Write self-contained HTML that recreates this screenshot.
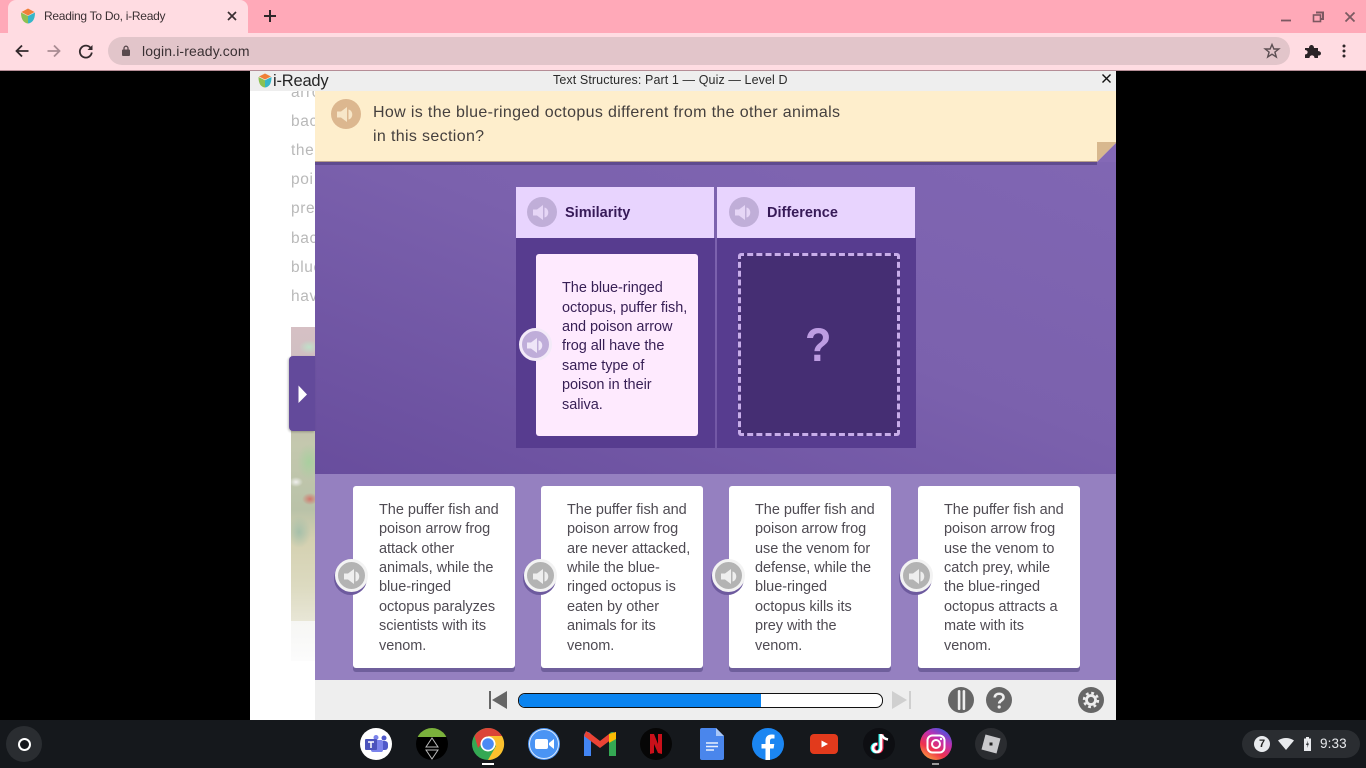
<!DOCTYPE html>
<html>
<head>
<meta charset="utf-8">
<style>
html,body{margin:0;padding:0;width:1366px;height:768px;overflow:hidden;background:#000;font-family:"Liberation Sans",sans-serif}
.a{position:absolute}
.t{position:absolute;white-space:nowrap}
svg{position:absolute;overflow:visible}
.ln{position:absolute;white-space:nowrap;font-size:14.5px;line-height:19.5px;color:#4f4b53;letter-spacing:-.05px}
.card{position:absolute;top:486px;width:162px;height:182px;background:#fff;border-radius:3px;box-shadow:0 4px 0 #6f5f9c}
.sp{position:absolute;top:559px;width:27px;height:27px;border-radius:50%;background:#b3b3b3;border:3px solid #f3f3f3;box-shadow:-1px 3px 0 #6d5a9e}
.hd{position:absolute;top:187px;width:198px;height:51px;background:#e8d4fe}
.hd b{position:absolute;left:49px;top:17px;font-size:14.5px;line-height:18px;color:#371a58}
.ic{position:absolute;width:30px;height:30px;border-radius:50%;background:#c0aed8}
.dock{position:absolute;top:728px;width:32px;height:32px;border-radius:50%}
.p{position:absolute;left:41px;white-space:nowrap;font-size:15.5px;line-height:18px;color:#b9b9b9;letter-spacing:.6px}
</style>
</head>
<body>
<!-- browser chrome -->
<div class="a" style="left:0;top:0;width:1366px;height:33px;background:#ffa9b8"></div>
<div class="a" style="left:0;top:33px;width:1366px;height:37px;background:#ffdce2"></div>
<div class="a" style="left:0;top:70px;width:1366px;height:1px;background:#b58d96"></div>
<div class="a" style="left:8px;top:0;width:240px;height:33px;background:#ffdce2;border-radius:8px 8px 0 0"></div>
<svg style="left:20px;top:8px" width="16" height="16" viewBox="0 0 16 16"><path d="M8 .5 14.5 4 8 7.500 1.500 4Z" fill="#f08038"/><path d="M1 4.500 8 8V15.500C4 15 1 12 1 4.500Z" fill="#8cc152"/><path d="M15 4.500 8 8V15.500C12 15 15 12 15 4.500Z" fill="#35b6c8"/></svg>
<div class="t" style="left:44px;top:8px;font-size:12px;line-height:16px;color:#3b3033;letter-spacing:-.27px">Reading To Do, i-Ready</div>
<svg style="left:226px;top:10px" width="12" height="12" viewBox="0 0 12 12"><path d="M2 2 10 10M10 2 2 10" stroke="#3a2f32" stroke-width="1.700"/></svg>
<svg style="left:263px;top:9px" width="14" height="14" viewBox="0 0 14 14"><path d="M7 1V13M1 7H13" stroke="#2e2629" stroke-width="2"/></svg>
<svg style="left:1279px;top:10px" width="14" height="14" viewBox="0 0 14 14"><path d="M2 10.500H12" stroke="#7c5861" stroke-width="1.800"/></svg>
<svg style="left:1312px;top:11px" width="13" height="12" viewBox="0 0 13 12"><path d="M4 1.500H11V8H8" fill="none" stroke="#7c5861" stroke-width="2"/><rect x="1.500" y="4" width="7" height="6.500" fill="none" stroke="#7c5861" stroke-width="1.600"/></svg>
<svg style="left:1344px;top:11px" width="12" height="12" viewBox="0 0 12 12"><path d="M1.500 1.500 10.500 10.500M10.500 1.500 1.500 10.500" stroke="#7b5a62" stroke-width="1.800"/></svg>
<svg style="left:14px;top:43px" width="16" height="16" viewBox="0 0 16 16"><path d="M14.500 8H2.500M8 2.500 2.500 8 8 13.500" fill="none" stroke="#33292c" stroke-width="1.800"/></svg>
<svg style="left:46px;top:43px" width="16" height="16" viewBox="0 0 16 16"><path d="M1.500 8H13.500M8 2.500 13.500 8 8 13.500" fill="none" stroke="#a98c93" stroke-width="1.800"/></svg>
<svg style="left:78px;top:43px" width="16" height="16" viewBox="0 0 16 16"><path d="M13 5.500A6 6 0 1 0 13.800 9.500" fill="none" stroke="#33292c" stroke-width="1.800"/><path d="M14.500 2V7H9.500Z" fill="#33292c"/></svg>
<div class="a" style="left:108px;top:37px;width:1182px;height:28px;border-radius:14px;background:#e2c5ca"></div>
<svg style="left:121px;top:45px" width="10" height="12" viewBox="0 0 10 12"><rect x="1" y="4.500" width="8" height="6.500" rx="1" fill="#5a4a4e"/><path d="M3 5V3.200A2 2 0 0 1 7 3.200V5" fill="none" stroke="#5a4a4e" stroke-width="1.300"/></svg>
<div class="t" style="left:142px;top:43px;font-size:14px;line-height:16px;color:#3a3033;letter-spacing:.12px">login.i-ready.com</div>
<svg style="left:1264px;top:43px" width="16" height="16" viewBox="0 0 16 16"><path d="M8 1.500 9.900 6H14.800L10.900 9.100 12.300 14 8 11.200 3.700 14 5.100 9.100 1.200 6H6.100Z" fill="none" stroke="#5c4f53" stroke-width="1.400"/></svg>
<svg style="left:1304px;top:43px" width="16" height="16" viewBox="0 0 16 16"><path d="M1 5H5C5 1 10 1 10 5H14V8C18 8 18 13 14 12.500V15H10.500C10.500 11.500 5.500 11.500 5.500 15H1V11.500C4.500 11.500 4.500 7 1 7Z" fill="#2a2326"/></svg>
<svg style="left:1342px;top:44px" width="4" height="14" viewBox="0 0 4 14"><circle cx="2" cy="2" r="1.500" fill="#2e2629"/><circle cx="2" cy="7" r="1.500" fill="#2e2629"/><circle cx="2" cy="12" r="1.500" fill="#2e2629"/></svg>

<!-- app frame -->
<div class="a" style="left:250px;top:71px;width:866px;height:649px;background:#fff;overflow:hidden">
  <div class="p" style="top:13px">arrow</div>
  <div class="p" style="top:42px">back</div>
  <div class="p" style="top:71px">the</div>
  <div class="p" style="top:100px">poi</div>
  <div class="p" style="top:129px">pre</div>
  <div class="p" style="top:159px">back</div>
  <div class="p" style="top:188px">blue</div>
  <div class="p" style="top:217px">have</div>
  <div class="a" style="left:41px;top:256px;width:24px;height:294px;background:radial-gradient(ellipse 10px 7px at 18px 20px,#bfe0c8 0,rgba(191,224,200,0) 100%),radial-gradient(ellipse 12px 18px at 18px 135px,#a9cf9f 0,rgba(169,207,159,0) 100%),radial-gradient(ellipse 8px 6px at 19px 172px,#d2776c 0,rgba(210,119,108,0) 100%),radial-gradient(ellipse 7px 5px at 5px 155px,#f0f0ee 0,rgba(240,240,238,0) 100%),radial-gradient(ellipse 12px 16px at 8px 205px,#a6c0aa 0,rgba(166,192,170,0) 100%),linear-gradient(180deg,#d6c0c4 0,#cfbfc2 12%,#c4bcae 22%,#c4c8ae 40%,#b9c2a8 62%,#d4d0b0 72%,#dcdac0 88%,#e8e6d6 100%)"></div>
  <div class="a" style="left:41px;top:550px;width:24px;height:40px;background:linear-gradient(180deg,#f6f6f4,#fcfcfc)"></div>
</div>
<!-- i-Ready title bar -->
<div class="a" style="left:250px;top:71px;width:866px;height:20px;background:#eeeeee"></div>
<svg style="left:258px;top:73px" width="14" height="15" viewBox="0 0 14 15"><path d="M7 .5 13 3.500 7 6.500 1 3.500Z" fill="#f08038"/><path d="M.5 4 7 7.200V14.500C3 14 .5 11 .5 4Z" fill="#8cc152"/><path d="M13.500 4 7 7.200V14.500C11 14 13.500 11 13.500 4Z" fill="#35b6c8"/></svg>
<div class="t" style="left:273px;top:71px;font-size:16.500px;line-height:20px;color:#252525;letter-spacing:-.2px">i-Ready</div>
<div class="t" style="left:553px;top:72px;font-size:12.500px;line-height:16px;color:#2b2b2b;letter-spacing:.1px">Text Structures: Part 1 — Quiz — Level D</div>
<svg style="left:1102px;top:74px" width="9" height="9" viewBox="0 0 9 9"><path d="M.5 .5 8.500 8.500M8.500 .5 .5 8.500" stroke="#111" stroke-width="1.400"/></svg>

<!-- activity -->
<div class="a" style="left:315px;top:162px;width:801px;height:312px;background:linear-gradient(to bottom left,#8066b3 0,#7b61ad 45%,#684d9d 100%)"></div>
<div class="a" style="left:315px;top:474px;width:801px;height:206px;background:#9580c0"></div>
<div class="a" style="left:315px;top:680px;width:801px;height:40px;background:#eeeeee"></div>
<div class="a" style="left:289px;top:356px;width:26px;height:75px;background:#634a9b;border-radius:4px 0 0 4px;box-shadow:-1px 1px 2px rgba(0,0,0,.25)"></div>
<svg style="left:298px;top:385px" width="10" height="19" viewBox="0 0 10 19"><path d="M.5 .5 9 9.500 .5 18Z" fill="#fff"/></svg>

<!-- question banner -->
<div class="a" style="left:315px;top:91px;width:801px;height:70px;background:#feeecc"></div>
<div class="a" style="left:315px;top:161px;width:782px;height:1px;background:#b9a08a"></div>
<div class="a" style="left:315px;top:162px;width:782px;height:3px;background:#5f4a8e"></div>
<svg style="left:1097px;top:142px" width="19" height="20" viewBox="0 0 19 20"><path d="M0 20V0H19V1L0 20Z" fill="#d8b88e"/><path d="M0 20 19 1V20Z" fill="#8469b6"/></svg>
<div class="a" style="left:331px;top:99px;width:30px;height:30px;border-radius:50%;background:#dcb78f"></div>
<svg style="left:336px;top:105px" width="20" height="18" viewBox="0 0 20 18"><path d="M1 6.500H5L11 2V17L5 12.500H1Z" fill="#f7e6c8"/><path d="M12.500 4.500C17.500 5.500 17.500 13.500 12.500 14.500Z" fill="#f7e6c8"/></svg>
<div class="t" style="left:373px;top:103px;font-size:16px;line-height:19px;color:#45403e;letter-spacing:.35px">How is the blue-ringed octopus different from the other animals</div>
<div class="t" style="left:373px;top:127px;font-size:16px;line-height:19px;color:#45403e;letter-spacing:.35px">in this section?</div>

<!-- columns -->
<div class="a" style="left:516px;top:238px;width:199px;height:210px;background:#573c8f"></div>
<div class="a" style="left:717px;top:238px;width:199px;height:210px;background:#573c8f"></div>
<div class="hd" style="left:516px"><b>Similarity</b></div>
<div class="hd" style="left:717px"><b style="left:50px">Difference</b></div>
<div class="ic" style="left:527px;top:197px"></div>
<div class="ic" style="left:729px;top:197px"></div>
<svg style="left:532px;top:203px" width="20" height="18" viewBox="0 0 20 18"><path d="M1 6.500H5L11 2V17L5 12.500H1Z" fill="#e6d6f6"/><path d="M12.500 4.500C17.500 5.500 17.500 13.500 12.500 14.500Z" fill="#e6d6f6"/></svg>
<svg style="left:734px;top:203px" width="20" height="18" viewBox="0 0 20 18"><path d="M1 6.500H5L11 2V17L5 12.500H1Z" fill="#e6d6f6"/><path d="M12.500 4.500C17.500 5.500 17.500 13.500 12.500 14.500Z" fill="#e6d6f6"/></svg>

<div class="a" style="left:536px;top:254px;width:162px;height:182px;background:#feeafe;border-radius:3px"></div>
<div class="ln" style="left:562px;top:279px;color:#371f55">The blue-ringed</div>
<div class="ln" style="left:562px;top:299px;color:#371f55">octopus, puffer fish,</div>
<div class="ln" style="left:562px;top:318px;color:#371f55">and poison arrow</div>
<div class="ln" style="left:562px;top:337px;color:#371f55">frog all have the</div>
<div class="ln" style="left:562px;top:357px;color:#371f55">same type of</div>
<div class="ln" style="left:562px;top:376px;color:#371f55">poison in their</div>
<div class="ln" style="left:562px;top:396px;color:#371f55">saliva.</div>
<div class="a" style="left:519px;top:328px;width:27px;height:27px;border-radius:50%;background:#bfadd9;border:3px solid #f3eaf8"></div>
<svg style="left:526px;top:336px" width="20" height="18" viewBox="0 0 20 18"><path d="M1 6.500H5L11 2V17L5 12.500H1Z" fill="#efe6f8"/><path d="M12.500 4.500C17.500 5.500 17.500 13.500 12.500 14.500Z" fill="#efe6f8"/></svg>

<div class="a" style="left:738px;top:253px;width:156px;height:177px;background:#452e73;border:3px dashed #c8aeea;border-radius:3px"></div>
<div class="t" style="left:805px;top:318px;font-size:47px;line-height:54px;font-weight:bold;color:#bd9de2;transform:scaleX(.92);transform-origin:0 0">?</div>

<!-- answer cards -->
<div class="card" style="left:353px"></div>
<div class="card" style="left:541px"></div>
<div class="card" style="left:729px"></div>
<div class="card" style="left:918px"></div>

<div class="ln" style="left:379px;top:501px">The puffer fish and</div>
<div class="ln" style="left:379px;top:520px">poison arrow frog</div>
<div class="ln" style="left:379px;top:540px">attack other</div>
<div class="ln" style="left:379px;top:559px">animals, while the</div>
<div class="ln" style="left:379px;top:578px">blue-ringed</div>
<div class="ln" style="left:379px;top:598px">octopus paralyzes</div>
<div class="ln" style="left:379px;top:617px">scientists with its</div>
<div class="ln" style="left:379px;top:637px">venom.</div>

<div class="ln" style="left:567px;top:501px">The puffer fish and</div>
<div class="ln" style="left:567px;top:520px">poison arrow frog</div>
<div class="ln" style="left:567px;top:540px">are never attacked,</div>
<div class="ln" style="left:567px;top:559px">while the blue-</div>
<div class="ln" style="left:567px;top:578px">ringed octopus is</div>
<div class="ln" style="left:567px;top:598px">eaten by other</div>
<div class="ln" style="left:567px;top:617px">animals for its</div>
<div class="ln" style="left:567px;top:637px">venom.</div>

<div class="ln" style="left:755px;top:501px">The puffer fish and</div>
<div class="ln" style="left:755px;top:520px">poison arrow frog</div>
<div class="ln" style="left:755px;top:540px">use the venom for</div>
<div class="ln" style="left:755px;top:559px">defense, while the</div>
<div class="ln" style="left:755px;top:578px">blue-ringed</div>
<div class="ln" style="left:755px;top:598px">octopus kills its</div>
<div class="ln" style="left:755px;top:617px">prey with the</div>
<div class="ln" style="left:755px;top:637px">venom.</div>

<div class="ln" style="left:944px;top:501px">The puffer fish and</div>
<div class="ln" style="left:944px;top:520px">poison arrow frog</div>
<div class="ln" style="left:944px;top:540px">use the venom to</div>
<div class="ln" style="left:944px;top:559px">catch prey, while</div>
<div class="ln" style="left:944px;top:578px">the blue-ringed</div>
<div class="ln" style="left:944px;top:598px">octopus attracts a</div>
<div class="ln" style="left:944px;top:617px">mate with its</div>
<div class="ln" style="left:944px;top:637px">venom.</div>

<div class="sp" style="left:335px"></div>
<div class="sp" style="left:524px"></div>
<div class="sp" style="left:712px"></div>
<div class="sp" style="left:900px"></div>
<svg style="left:343px;top:567px" width="20" height="18" viewBox="0 0 20 18"><path d="M1 6.500H5L11 2V17L5 12.500H1Z" fill="#eee"/><path d="M12.500 4.500C17.500 5.500 17.500 13.500 12.500 14.500Z" fill="#eee"/></svg>
<svg style="left:532px;top:567px" width="20" height="18" viewBox="0 0 20 18"><path d="M1 6.500H5L11 2V17L5 12.500H1Z" fill="#eee"/><path d="M12.500 4.500C17.500 5.500 17.500 13.500 12.500 14.500Z" fill="#eee"/></svg>
<svg style="left:720px;top:567px" width="20" height="18" viewBox="0 0 20 18"><path d="M1 6.500H5L11 2V17L5 12.500H1Z" fill="#eee"/><path d="M12.500 4.500C17.500 5.500 17.500 13.500 12.500 14.500Z" fill="#eee"/></svg>
<svg style="left:908px;top:567px" width="20" height="18" viewBox="0 0 20 18"><path d="M1 6.500H5L11 2V17L5 12.500H1Z" fill="#eee"/><path d="M12.500 4.500C17.500 5.500 17.500 13.500 12.500 14.500Z" fill="#eee"/></svg>

<!-- player bar -->
<svg style="left:489px;top:690px" width="19" height="20" viewBox="0 0 19 20"><rect x="0" y="1" width="2" height="18" fill="#666"/><path d="M18 1V19L3 10Z" fill="#666"/></svg>
<div class="a" style="left:518px;top:693px;width:363px;height:13px;background:#fff;border:1px solid #111;border-radius:7px;overflow:hidden"><div style="width:242px;height:13px;background:#0a84f0"></div></div>
<svg style="left:892px;top:690px" width="19" height="20" viewBox="0 0 19 20"><path d="M0 1V19L15 10Z" fill="#cfcfcf"/><rect x="17" y="1" width="2" height="18" fill="#cfcfcf"/></svg>
<svg style="left:948px;top:687px" width="26" height="26" viewBox="0 0 26 26"><circle cx="13" cy="13" r="13" fill="#666"/><rect x="9.800" y="3" width="2.600" height="20" rx="1.300" fill="#eee"/><rect x="14.600" y="3" width="2.600" height="20" rx="1.300" fill="#eee"/></svg>
<svg style="left:986px;top:687px" width="26" height="26" viewBox="0 0 26 26"><circle cx="13" cy="13" r="13" fill="#666"/><path d="M8.800 10.500C8.800 5.500 17.500 5.500 17.500 10.500C17.500 13.500 13.200 13.500 13.200 16.500" fill="none" stroke="#eee" stroke-width="2.600"/><circle cx="13.200" cy="20" r="1.600" fill="#eee"/></svg>
<svg style="left:1078px;top:687px" width="26" height="26" viewBox="0 0 26 26"><circle cx="13" cy="13" r="13" fill="#666"/><circle cx="13" cy="13" r="4.500" fill="none" stroke="#eee" stroke-width="2.800"/><circle cx="13" cy="13" r="7" fill="none" stroke="#eee" stroke-width="2.400" stroke-dasharray="2.800 2.700"/></svg>

<!-- shelf -->
<div class="a" style="left:0;top:720px;width:1366px;height:48px;background:#15181c"></div>
<div class="a" style="left:6px;top:726px;width:36px;height:36px;border-radius:50%;background:#2a2d31"></div>
<div class="a" style="left:18px;top:738px;width:9px;height:9px;border-radius:50%;border:2px solid #fff;background:#15181c"></div>

<div class="dock" style="left:360px;background:#fff"></div>
<svg style="left:365px;top:735px" width="24" height="18" viewBox="0 0 24 18"><circle cx="19" cy="3" r="2.500" fill="#5059c9"/><rect x="13" y="6" width="10" height="9" rx="3" fill="#5059c9"/><circle cx="11" cy="2.500" r="2.500" fill="#7b83eb"/><rect x="6" y="5" width="12" height="12" rx="2" fill="#7b83eb"/><rect x="0" y="4" width="12" height="11" rx="1" fill="#4b53bc"/><path d="M3 7H9M6 7V13" stroke="#fff" stroke-width="1.500"/></svg>

<div class="dock" style="left:416px;background:#000;overflow:hidden"><div style="width:32px;height:9px;background:#7bb13c"></div></div>
<svg style="left:425px;top:737px" width="14" height="24" viewBox="0 0 14 24"><path d="M7 1 13 10H1ZM7 22 13 13H1Z" fill="none" stroke="#bbb" stroke-width="1"/></svg>

<svg style="left:472px;top:728px" width="32" height="32" viewBox="0 0 32 32"><circle cx="16" cy="16" r="16" fill="#34a853"/><path d="M16 0A16 16 0 0 1 30 8L16 8 6 20 2.500 8A16 16 0 0 1 16 0Z" fill="#db4437"/><path d="M30 8A16 16 0 0 1 16 32L24 18 16 8Z" fill="#fbc02d"/><circle cx="16" cy="16" r="7.500" fill="#fff"/><circle cx="16" cy="16" r="5.800" fill="#4a8af4"/></svg>
<div class="a" style="left:482px;top:763px;width:12px;height:2px;background:#fff"></div>

<svg style="left:528px;top:728px" width="32" height="32" viewBox="0 0 32 32"><circle cx="16" cy="16" r="16" fill="#4a94f4"/><circle cx="16" cy="16" r="14.500" fill="none" stroke="#dbe9fc" stroke-width="1"/><rect x="7" y="11" width="13" height="10" rx="2" fill="#fff"/><path d="M21 15 26 11V21L21 17Z" fill="#fff"/></svg>

<svg style="left:583px;top:731px" width="34" height="26" viewBox="0 0 34 26"><path d="M1 25V5C1 1 5 0 7 2L8 3V25Z" fill="#4285f4"/><path d="M26 25V3L27 2C29 0 33 1 33 5V25Z" fill="#34a853"/><path d="M1 5 17 17 33 5 33 1 26 3 17 10 8 3 3 0Z" fill="#ea4335"/><path d="M26 3 33 1V8L26 12Z" fill="#fbbc04"/></svg>

<div class="dock" style="left:640px;background:#060606"></div>
<svg style="left:650px;top:734px" width="12" height="20" viewBox="0 0 12 20"><path d="M0 0H4L8 10V0H12V20L8 19 4 10V19L0 20Z" fill="#c9101a"/></svg>

<svg style="left:700px;top:728px" width="24" height="32" viewBox="0 0 24 32"><path d="M2 0H16L24 8V30A2 2 0 0 1 22 32H2A2 2 0 0 1 0 30V2A2 2 0 0 1 2 0Z" fill="#4a86ec"/><path d="M16 0 24 8H16Z" fill="#a9c7f7"/><path d="M6 15H18M6 18.500H18M6 22H14" stroke="#e8f0fe" stroke-width="1.400"/></svg>

<svg style="left:752px;top:728px" width="32" height="32" viewBox="0 0 32 32"><circle cx="16" cy="16" r="16" fill="#1b86f2"/><path d="M13.500 32V20.500H9.500V16H13.500V12.500C13.500 8.500 16 6.500 19.500 6.500C21 6.500 22.500 6.700 22.500 6.700V10.500H20.500C18.700 10.500 18 11.500 18 13V16H22.300L21.600 20.500H18V32Z" fill="#fff"/></svg>

<svg style="left:810px;top:734px" width="28" height="20" viewBox="0 0 28 20"><rect width="28" height="20" rx="4" fill="#e23a1c"/><path d="M11.500 6.500 18 10 11.500 13.500Z" fill="#fff"/></svg>

<div class="dock" style="left:863px;background:#0d0e12"></div>
<svg style="left:870px;top:733px" width="19" height="22" viewBox="0 0 19 22"><path d="M10 1V15A4 4 0 1 1 6 11" fill="none" stroke="#25f4ee" stroke-width="3"/><path d="M12 1V15A4 4 0 1 1 8 11" fill="none" stroke="#fe2c55" stroke-width="3"/><path d="M11 1V15A4 4 0 1 1 7 11" fill="none" stroke="#fff" stroke-width="2.600"/><path d="M12 2C13 5 15 6 18 6.500" fill="none" stroke="#fff" stroke-width="2.600"/></svg>

<svg style="left:920px;top:728px" width="32" height="32" viewBox="0 0 32 32"><defs><linearGradient id="ig" x1="0" y1="1" x2=".6" y2="0"><stop offset="0" stop-color="#fdc83c"/><stop offset=".4" stop-color="#f0324c"/><stop offset=".75" stop-color="#c02fb0"/><stop offset="1" stop-color="#5a4fd8"/></linearGradient></defs><circle cx="16" cy="16" r="16" fill="url(#ig)"/><rect x="7.500" y="7.500" width="17" height="17" rx="5" fill="none" stroke="#fff" stroke-width="2"/><circle cx="16" cy="16" r="4" fill="none" stroke="#fff" stroke-width="2"/><circle cx="21" cy="11" r="1.200" fill="#fff"/></svg>
<div class="a" style="left:932px;top:763px;width:7px;height:2px;background:#9a9a9a"></div>

<div class="dock" style="left:975px;background:#2a2c30"></div>
<svg style="left:981px;top:734px" width="20" height="20" viewBox="0 0 20 20"><path d="M4.500 .5 19.500 4.500 15.500 19.500 .5 15.500Z" fill="#c9c9cc"/><rect x="8.500" y="8.500" width="3" height="3" fill="#222"/></svg>

<div class="a" style="left:1242px;top:730px;width:118px;height:28px;border-radius:14px;background:#2a2d31"></div>
<div class="a" style="left:1254px;top:736px;width:16px;height:16px;border-radius:50%;background:#e8eaed;color:#222;font-size:11px;font-weight:bold;line-height:16px;text-align:center">7</div>
<svg style="left:1278px;top:738px" width="16" height="12" viewBox="0 0 16 12"><path d="M0 2.500C5 -.8 11 -.8 16 2.500L8 12Z" fill="#e8eaed"/></svg>
<svg style="left:1304px;top:737px" width="7" height="14" viewBox="0 0 7 14"><path d="M2 0H5V1.500H7V14H0V1.500H2Z" fill="#e8eaed"/><path d="M4 3.500 2 8H3.500L3 11 5 6.500H3.500Z" fill="#2a2d31"/></svg>
<div class="t" style="left:1320px;top:736px;font-size:13.500px;line-height:16px;color:#e8eaed;letter-spacing:.1px">9:33</div>
</body>
</html>
